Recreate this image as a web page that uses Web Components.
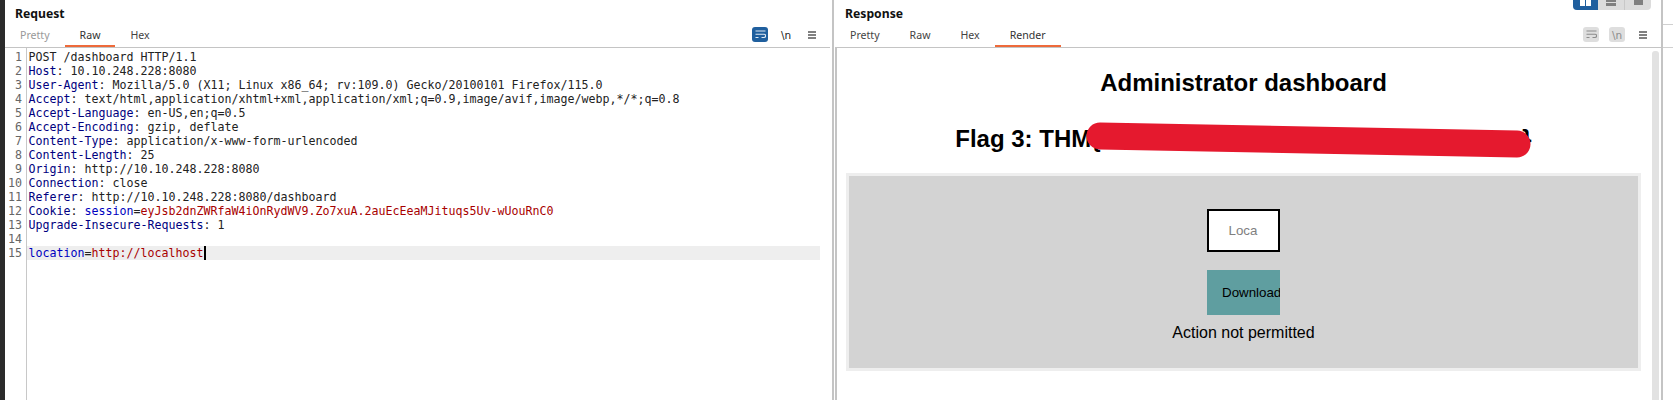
<!DOCTYPE html>
<html>
<head>
<meta charset="utf-8">
<title>Burp Repeater</title>
<style>
    html, body { margin: 0; height: 400px; overflow: hidden; background: #fff; }
</style>
</head>
<body>
<burp-app>
    <message-pane slot="left" heading="Request" tabs="Pretty,Raw,Hex" active="Raw" first-muted>
        <raw-editor></raw-editor>
    </message-pane>
    <message-pane slot="right" heading="Response" tabs="Pretty,Raw,Hex,Render" active="Render" tools-muted layout-toggle>
        <render-view></render-view>
    </message-pane>
</burp-app>

<script>
const wrapIcon = (fg) => `
    <svg width="11" height="9" viewBox="0 0 11 9" fill="none" stroke="${fg}" stroke-width="1.1">
        <path d="M0.5 1h10M0.5 4.2h8.5a1.6 1.6 0 0 1 0 3.3H6.5M0.5 7.5h3"/>
    </svg>`;

class LayoutToggle extends HTMLElement {
    constructor() {
        super();
        this.attachShadow({ mode: "open" });
        this.shadowRoot.innerHTML = `
            <style>
                :host { display: flex; height: 10px; width: 78px; border-radius: 0 0 4px 4px; overflow: hidden; background: #dcdcdc; }
                div { flex: 1; display: flex; align-items: flex-start; justify-content: center; }
                .on { background: #1f5f9e; flex: 0 0 25px; }
                .mid { border-right: 1px solid #c8c8c8; }
            </style>
            <div class="on"><svg width="11" height="6"><path d="M0 0h5v6H0zM6 0h5v6H6z" fill="#fff"/></svg></div>
            <div class="mid"><svg width="10" height="6"><path d="M0 0h10v2H0zM0 3h10v3H0z" fill="#808080"/></svg></div>
            <div><svg width="9" height="5"><path d="M0 0h9v5H0z" fill="#808080"/></svg></div>
        `;
    }
}

class PaneTools extends HTMLElement {
    constructor() {
        super();
        this.attachShadow({ mode: "open" });
        const muted = this.hasAttribute("muted");
        this.shadowRoot.innerHTML = `
            <style>
                :host { display: flex; align-items: center; gap: 10px; align-self: flex-start; margin-top: 2px; }
                .btn { width: 16px; height: 15px; border-radius: 3px; display: flex; align-items: center; justify-content: center; box-sizing: border-box;
                       font: 10.5px "DejaVu Sans", sans-serif; color: #222; }
                .wrap { background: #1f5f9e; }
                :host([muted]) .wrap, :host([muted]) .nl { background: #dedede; color: #8c8c8c; }
                .menu { width: 8px; margin-left: 4px; margin-right: 6px; }
            </style>
            <div class="btn wrap">${wrapIcon(muted ? "#8c8c8c" : "#dfe9f3")}</div>
            <div class="btn nl">\\n</div>
            <div class="btn menu"><svg width="8" height="8"><path d="M0 0h8v2H0zM0 3h8v2H0zM0 6h8v2H0z" fill="#808080"/></svg></div>
        `;
    }
}

class MessagePane extends HTMLElement {
    constructor() {
        super();
        this.attachShadow({ mode: "open" });
        const tabs = this.getAttribute("tabs").split(",");
        const active = this.getAttribute("active");
        const buttons = tabs.map((t, i) => {
            let cls = t === active ? "tab on" : "tab";
            if (i === 0 && this.hasAttribute("first-muted")) cls += " muted";
            return `<span class="${cls}">${t}</span>`;
        }).join("");
        this.shadowRoot.innerHTML = `
            <style>
                :host { display: flex; flex-direction: column; height: 100%; min-width: 0; font-family: "Noto Sans", sans-serif; color: #111; }
                .head { display: flex; height: 25px; justify-content: space-between; align-items: flex-start; }
                h2 { margin: 5px 0 0 10px; font-size: 12.2px; line-height: 17px; font-weight: 700; }
                .top { margin-right: 10px; }
                .bar { display: flex; height: 22px; align-items: stretch; justify-content: space-between; padding-right: 10px; }
                :host([tools-muted]) .bar { padding-right: 8px; }
                .tabs { display: flex; }
                .tab { display: block; padding: 1px 15px 0; font-size: 10.6px; line-height: 18px; box-sizing: border-box; height: 21px; color: #444; }
                .tab.on { border-bottom: 2px solid #ee6a3a; color: #333; height: 22px; }
                .tab.muted { color: #999; }
                .rule { height: 1px; background: #c4c4c4; margin-right: 2px; }
                :host([tools-muted]) .rule { margin-right: 0; }
                .body { flex: 1; min-height: 0; display: flex; }
                ::slotted(*) { flex: 1; min-width: 0; }
            </style>
            <div class="head">
                <h2>${this.getAttribute("heading")}</h2>
                ${this.hasAttribute("layout-toggle") ? '<layout-toggle class="top"></layout-toggle>' : ""}
            </div>
            <div class="bar">
                <div class="tabs">${buttons}</div>
                <pane-tools ${this.hasAttribute("tools-muted") ? "muted" : ""}></pane-tools>
            </div>
            <div class="rule"></div>
            <div class="body"><slot></slot></div>
        `;
    }
}

// one header per row, name in navy
const rows = [
    `POST /dashboard HTTP/1.1`,
    `<b>Host</b>: 10.10.248.228:8080`,
    `<b>User-Agent</b>: Mozilla/5.0 (X11; Linux x86_64; rv:109.0) Gecko/20100101 Firefox/115.0`,
    `<b>Accept</b>: text/html,application/xhtml+xml,application/xml;q=0.9,image/avif,image/webp,*/*;q=0.8`,
    `<b>Accept-Language</b>: en-US,en;q=0.5`,
    `<b>Accept-Encoding</b>: gzip, deflate`,
    `<b>Content-Type</b>: application/x-www-form-urlencoded`,
    `<b>Content-Length</b>: 25`,
    `<b>Origin</b>: http://10.10.248.228:8080`,
    `<b>Connection</b>: close`,
    `<b>Referer</b>: http://10.10.248.228:8080/dashboard`,
    `<b>Cookie</b>: <u>session</u>=<em>eyJsb2dnZWRfaW4iOnRydWV9.Zo7xuA.2auEcEeaMJituqs5Uv-wUouRnC0</em>`,
    `<b>Upgrade-Insecure-Requests</b>: 1`,
    ``,
    `<u>location</u>=<em>http://localhost</em><span class="caret"></span>`
];

class RawEditor extends HTMLElement {
    constructor() {
        super();
        this.attachShadow({ mode: "open" });
        const lines = rows.map((r, i) => `
            <div class="row ${i === 14 ? "cur" : ""}"><span class="no">${i + 1}</span><span class="code">${r}</span></div>`).join("");
        this.shadowRoot.innerHTML = `
            <style>
                :host { display: block; font: 11.64px/14px "DejaVu Sans Mono", monospace; color: #222; padding-top: 2px; position: relative; }
                :host::before { content: ""; position: absolute; left: 21px; top: 0; bottom: 0; width: 1px; background: #c8c8c8; }
                .row { display: flex; height: 14px; white-space: pre; margin-right: 12px; }
                .no { flex: 0 0 17px; text-align: right; color: #666; }
                .code { flex: 1; margin-left: 5px; padding-left: 1.5px; height: 14px; }
                .cur .code { background: #eeeeee; }
                b { font-weight: 400; color: #000080; }
                u { text-decoration: none; color: #0000c0; }
                em { font-style: normal; color: #a80000; }
                .caret { display: inline-block; width: 1px; height: 14px; background: #000; vertical-align: top; margin-left: 1px; box-shadow: 1px 0 0 #000; }
            </style>
            ${lines}
        `;
    }
}

class RenderView extends HTMLElement {
    constructor() {
        super();
        this.attachShadow({ mode: "open" });
        this.shadowRoot.innerHTML = `
            <style>
                :host { display: flex; position: relative; border-left: 2px solid #c4c4c4; font-family: "Liberation Sans", Arial, sans-serif; color: #000; overflow: hidden; }
                .doc { flex: 1; min-width: 0; padding: 0 11px 0 9px; text-align: center; }
                .track { flex: 0 0 9px; }
                .thumb { width: 7px; margin-top: 3px; height: 400px; background: #e2e2e2; border-radius: 3px; }
                h1 { margin: 21px 0 0; font-size: 24px; line-height: 28px; font-weight: 700; }
                h2 { margin: 28px 0 0; font-size: 24px; line-height: 28px; font-weight: 700; white-space: nowrap; }
                .box { margin-top: 20px; height: 159px; border: 3px solid #eeeeee; background: #d3d3d3; display: flex; flex-direction: column; align-items: center; padding-top: 33px; }
                .field { width: 73px; height: 43px; box-sizing: border-box; border: 2px solid #000; background: #fff; color: #808080; font-size: 13.33px; display: flex; align-items: center; padding-left: 19.5px; }
                .go { margin-top: 18px; width: 73px; height: 45px; background: #5f9ea0; font-size: 13.33px; color: #000; display: flex; align-items: center; padding-left: 15px; box-sizing: border-box; overflow: hidden; white-space: nowrap; }
                p { margin: 9px 0 0; font-size: 16px; line-height: 18px; }
                .scribble { position: absolute; left: 0; top: 0; pointer-events: none; }
            </style>
            <div class="doc">
                <h1>Administrator dashboard</h1>
                <h2>Flag 3: THM{xxxxxxxxxxxxxxxxxxxxxxxxxxxxxtxx}</h2>
                <div class="box">
                    <div class="field">Loca</div>
                    <div class="go">Download</div>
                    <p>Action not permitted</p>
                </div>
            </div>
            <div class="track"><div class="thumb"></div></div>
            <svg class="scribble" width="824" height="160"><path d="M263 88L680 96" stroke="#e5192e" stroke-width="27" stroke-linecap="round" fill="none"/></svg>
        `;
    }
}

class BurpApp extends HTMLElement {
    constructor() {
        super();
        this.attachShadow({ mode: "open" });
        this.shadowRoot.innerHTML = `
            <style>
                :host { display: grid; grid-template-columns: 5px 827px 3px 826px 2px 1fr; height: 400px; overflow: hidden; background: #fff; }
                .strip { background: #2b2b2b; }
                .split { background: linear-gradient(90deg, #c4c4c4 2px, #fff 2px); }
                .edge { display: flex; flex-direction: column; }
                .edge i { display: block; height: 1px; background: #d0d0d0; margin-top: 24px; }
                .edge i + i { margin-top: 22px; }
                ::slotted(*) { height: 400px; }
            </style>
            <div class="strip"></div>
            <slot name="left"></slot>
            <div class="split"></div>
            <slot name="right"></slot>
            <div class="split"></div>
            <div class="edge"><i></i><i></i></div>
        `;
    }
}

customElements.define("layout-toggle", LayoutToggle);
customElements.define("pane-tools", PaneTools);
customElements.define("raw-editor", RawEditor);
customElements.define("render-view", RenderView);
customElements.define("message-pane", MessagePane);
customElements.define("burp-app", BurpApp);
</script>
</body>
</html>
